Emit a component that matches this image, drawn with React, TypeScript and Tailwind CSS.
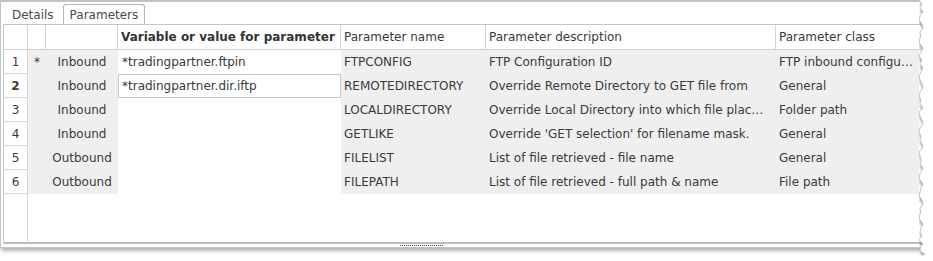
import React from "react";

const rows = [
  { n: "1", mark: "*", dir: "Inbound", value: "*tradingpartner.ftpin", name: "FTPCONFIG", desc: "FTP Configuration ID", cls: "FTP inbound configu…" },
  { n: "2", mark: "", dir: "Inbound", value: "*tradingpartner.dir.iftp", name: "REMOTEDIRECTORY", desc: "Override Remote Directory to GET file from", cls: "General" },
  { n: "3", mark: "", dir: "Inbound", value: "", name: "LOCALDIRECTORY", desc: "Override Local Directory into which file plac…", cls: "Folder path" },
  { n: "4", mark: "", dir: "Inbound", value: "", name: "GETLIKE", desc: "Override 'GET selection' for filename mask.", cls: "General" },
  { n: "5", mark: "", dir: "Outbound", value: "", name: "FILELIST", desc: "List of file retrieved - file name", cls: "General" },
  { n: "6", mark: "", dir: "Outbound", value: "", name: "FILEPATH", desc: "List of file retrieved - full path & name", cls: "File path" },
];

// jagged torn edge on the right side of the screenshot
const jag = [0, 3, 1, 4, 1, 0, 3, 4, 1, 2, 0, 1, 4, 2, 0, 3, 1, 4, 2, 0, 1, 3, 4, 1, 0, 2, 1, 4, 0, 1, 3, 4, 1, 0, 2, 1, 3, 4, 0, 1, 2, 1, 4, 2, 0, 1, 4, 2, 1, 0, 3, 4, 1, 2, 0, 1, 4, 2, 1, 3, 0, 4, 1, 2];

function TornEdge() {
  const pts = jag.map((d, i) => `${5 + d},${i * 4}`).join(" ");
  return (
    <svg className="absolute top-0 left-[914px]" width="19" height="256" viewBox="0 0 19 256">
      <defs>
        <filter id="sh" x="-50%" y="-10%" width="200%" height="120%">
          <feGaussianBlur stdDeviation="1.3" />
        </filter>
      </defs>
      <polyline points={pts} fill="none" stroke="#8c8c8c" strokeWidth="3" filter="url(#sh)" transform="translate(2,3)" />
      <polygon points={`${pts} 19,256 19,0`} fill="#ffffff" />
      <polyline points={pts} fill="none" stroke="#c4c4c4" strokeWidth="1" />
    </svg>
  );
}

export default function App() {
  return (
    <div className="relative w-[933px] h-[261px] bg-white font-['DejaVu_Sans',sans-serif] text-[12px] text-[#3a3a3a]">
      <div className="w-[924px] h-[248px] border-t-2 border-l border-b border-[#c2c2c2] bg-white shadow-[1px_3px_4px_rgba(0,0,0,0.3)] flex flex-col">
        {/* tabs */}
        <div className="h-[22px] flex items-end pl-[3px]">
          <div className="h-[19px] px-[8px] flex items-center text-[12px] text-[#4a4a4a]">Details</div>
          <div className="h-[20px] ml-[1px] px-[6px] flex items-center text-[12px] text-[#4a4a4a] border border-b-0 border-[#b8b8b8] rounded-t-[3px] bg-white">
            Parameters
          </div>
        </div>

        {/* grid */}
        <div className="ml-[2px] flex-1 flex flex-col border-l border-t border-b-2 border-[#c4c4c4] border-b-[#bdbdbd] overflow-hidden">
          {/* header */}
          <div className="h-[25px] flex border-b border-[#cfcfcf] shrink-0">
            <div className="w-[24px] border-r border-[#d6d6d6]" />
            <div className="w-[18px] border-r border-[#d6d6d6]" />
            <div className="w-[72px] border-r border-[#d6d6d6]" />
            <div className="w-[223px] border-r border-[#d6d6d6] pl-[3px] flex items-center font-bold text-[#333] whitespace-nowrap overflow-hidden">
              Variable or value for parameter
            </div>
            <div className="w-[145px] border-r border-[#d6d6d6] pl-[3px] flex items-center">Parameter name</div>
            <div className="w-[290px] border-r border-[#d6d6d6] pl-[3px] flex items-center">Parameter description</div>
            <div className="w-[143px] pl-[3px] flex items-center whitespace-nowrap">Parameter class</div>
          </div>

          {rows.map((r) => (
            <div key={r.n} className="h-[24px] flex shrink-0">
              <div
                className={`w-[24px] border-r border-b border-[#d6d6d6] flex items-center justify-center ${
                  r.n === "2" ? "font-bold" : ""
                }`}
              >
                {r.n}
              </div>
              <div className="w-[18px] bg-[#efefef] flex items-center justify-center">{r.mark}</div>
              <div className="w-[72px] bg-[#efefef] flex items-center justify-center">{r.dir}</div>
              {r.n === "2" ? (
                <div className="w-[223px] border border-[#c8c8c8] bg-white pl-[3px] flex items-center">{r.value}</div>
              ) : (
                <div className="w-[223px] bg-white pl-[4px] flex items-center">{r.value}</div>
              )}
              <div className="w-[145px] bg-[#efefef] pl-[3px] flex items-center whitespace-nowrap">{r.name}</div>
              <div className="w-[290px] bg-[#efefef] pl-[3px] flex items-center whitespace-nowrap overflow-hidden">{r.desc}</div>
              <div className="w-[143px] bg-[#efefef] pl-[3px] flex items-center whitespace-nowrap overflow-hidden">{r.cls}</div>
            </div>
          ))}

          {/* empty area below rows */}
          <div className="flex-1 flex">
            <div className="w-[24px] border-r border-[#d6d6d6]" />
          </div>
        </div>

        {/* splitter */}
        <div className="h-[3px] flex justify-center pr-[82px]">
          <div className="w-[43px] mt-[1px] border-t border-dotted border-[#555]" />
        </div>
      </div>
      <TornEdge />
    </div>
  );
}
